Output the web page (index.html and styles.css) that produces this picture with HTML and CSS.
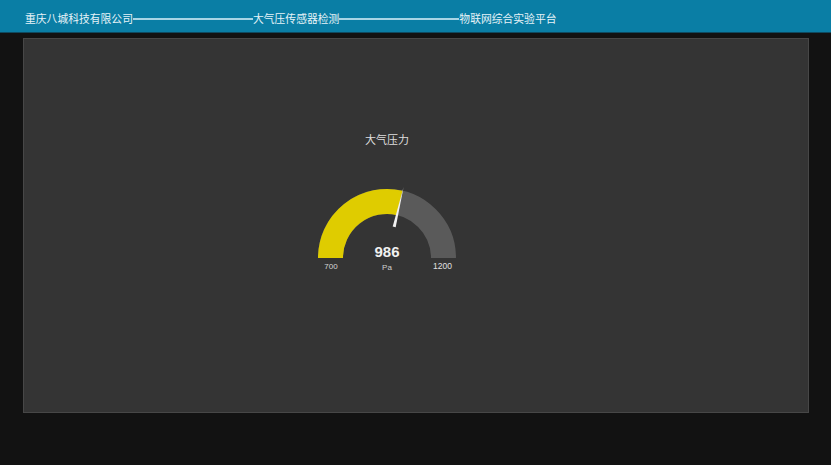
FILE: index.html
```html
<!DOCTYPE html>
<html lang="zh">
<head>
<meta charset="utf-8">
<title>大气压传感器检测</title>
<link rel="stylesheet" href="styles.css">
</head>
<body>
<header class="topbar">
  <span class="seg">重庆八城科技有限公司</span>
  <span class="rule"></span>
  <span class="seg">大气压传感器检测</span>
  <span class="rule"></span>
  <span class="seg">物联网综合实验平台</span>
</header>
<main class="panel">
  <div class="widget">
    <svg class="gauge" width="200" height="160" viewBox="0 0 200 160">
      <text class="g-title" x="100" y="19" text-anchor="middle">大气压力</text>
      <path class="arc-bg" d="M 43.5 133 A 56.5 56.5 0 0 1 156.5 133"/>
      <path class="arc-val" d="M 43.5 133 A 56.5 56.5 0 0 1 112.71 77.95"/>
      <polygon class="needle" points="108.7,102.2 105.7,101.5 116.6,61.9"/>
      <text class="g-value" x="100" y="131.5" text-anchor="middle">986</text>
      <text class="g-unit" x="100" y="145" text-anchor="middle">Pa</text>
      <text class="g-min" x="44" y="143.5" text-anchor="middle">700</text>
      <text class="g-max" x="155.5" y="143.5" text-anchor="middle">1200</text>
    </svg>
  </div>
</main>
</body>
</html>
```
FILE: styles.css
```css
html, body {
  margin: 0;
  padding: 0;
}
body {
  background: #121212;
  width: 831px;
  height: 465px;
  overflow: hidden;
  font-family: "Noto Sans CJK SC", "Noto Sans", sans-serif;
}
.topbar {
  box-sizing: border-box;
  height: 33px;
  padding: 4px 0 0 25px;
  background: #0a7ea5;
  border-bottom: 1px solid #0f4a60;
  display: flex;
  align-items: center;
  color: #e6f3f8;
}
.seg {
  font-size: 10.8px;
  line-height: 14px;
  white-space: nowrap;
}
.rule {
  display: block;
  width: 120px;
  height: 2px;
  margin-top: 1px;
  background: #a8d5e5;
}
.panel {
  box-sizing: border-box;
  margin: 5px 22px 0 23px;
  height: 375px;
  background: #343434;
  border: 1px solid #474747;
  display: flex;
}
.widget {
  margin: 86px 0 0 263px;
  width: 200px;
  height: 160px;
}
.gauge {
  display: block;
}
.g-title {
  font-family: "Noto Sans CJK SC", sans-serif;
  font-size: 11px;
  fill: #dedede;
}
.arc-bg {
  fill: none;
  stroke: #5a5a5a;
  stroke-width: 25;
}
.arc-val {
  fill: none;
  stroke: #dfcc00;
  stroke-width: 25;
}
.needle {
  fill: #f2f2f2;
}
.g-value {
  font-family: "Liberation Sans", Arial, sans-serif;
  font-weight: bold;
  font-size: 15px;
  fill: #f0f0f0;
}
.g-unit {
  font-family: "Liberation Sans", Arial, sans-serif;
  font-size: 8px;
  fill: #cfcfcf;
}
.g-min {
  font-family: "Liberation Sans", Arial, sans-serif;
  font-size: 8px;
  fill: #d6d6d6;
}
.g-max {
  font-family: "Liberation Sans", Arial, sans-serif;
  font-size: 8.5px;
  fill: #e0e0e0;
}
```
